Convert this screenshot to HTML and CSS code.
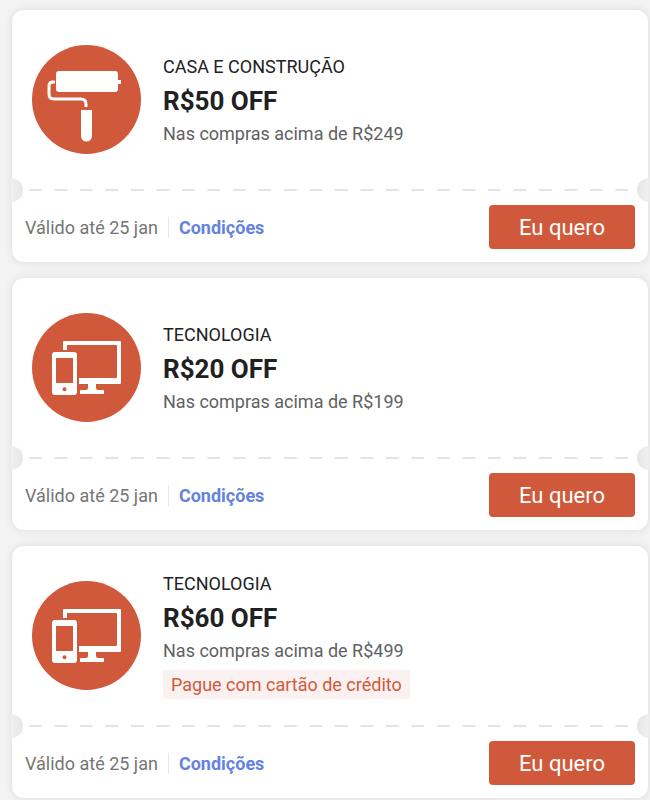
FILE: index.html
```
<!DOCTYPE html>
<html lang="pt-BR">
<head>
  <meta charset="UTF-8" />
  <meta name="viewport" content="width=device-width, initial-scale=1.0"/>
  <title>Cupons</title>
  <link rel="stylesheet" href="styles.css">
</head>
<body>
  <!-- Shared icon -->
  <svg class="sprite" width="0" height="0" aria-hidden="true">
    <symbol id="devices" viewBox="0 0 109 109">
      <path d="M31 37V29q0-1 1-1H88q1 0 1 1V70q0 1-1 1H64v4q0 2 2 2h5q1 0 1 1v3H48v-3q0-1 1-1h5q2 0 2-2V71H47V65H84q1 0 1-1V33q0-1-1-1H35V37z"/>
      <path fill-rule="evenodd" d="M23 39H42q3 0 3 3V79q0 3-3 3H23q-3 0-3-3V42q0-3 3-3zM24 45V70H41V45zM32.500 74.300a2 2 0 1 0 .01 0z"/>
    </symbol>
  </svg>

  <main class="coupons">
    <article class="coupon">
      <div class="coupon-top">
        <svg class="icon" viewBox="0 0 109 109" aria-hidden="true">
          <rect x="24" y="26" width="62" height="21" rx="3"/>
          <path d="M86 35h3v4h-3zM49 65H60V91a5.500 5.500 0 0 1-11 0z"/>
          <path class="wire" d="M23 37h-2q-4 0-4 4v8q0 5 5 5H49q5 0 5 5v3"/>
        </svg>
        <div class="info">
          <h2>CASA E CONSTRUÇÃO</h2>
          <p class="amount">R$50 OFF</p>
          <p class="rule">Nas compras acima de R$249</p>
        </div>
      </div>
      <div class="cut"></div>
      <div class="coupon-bottom">
        <span class="valid">Válido até 25 jan</span>
        <a href="#">Condições</a>
        <button type="button">Eu quero</button>
      </div>
    </article>

    <article class="coupon">
      <div class="coupon-top">
        <svg class="icon" aria-hidden="true"><use href="#devices"/></svg>
        <div class="info">
          <h2>TECNOLOGIA</h2>
          <p class="amount">R$20 OFF</p>
          <p class="rule">Nas compras acima de R$199</p>
        </div>
      </div>
      <div class="cut"></div>
      <div class="coupon-bottom">
        <span class="valid">Válido até 25 jan</span>
        <a href="#">Condições</a>
        <button type="button">Eu quero</button>
      </div>
    </article>

    <article class="coupon">
      <div class="coupon-top">
        <svg class="icon" aria-hidden="true"><use href="#devices"/></svg>
        <div class="info">
          <h2>TECNOLOGIA</h2>
          <p class="amount">R$60 OFF</p>
          <p class="rule">Nas compras acima de R$499</p>
          <p class="tag">Pague com cartão de crédito</p>
        </div>
      </div>
      <div class="cut"></div>
      <div class="coupon-bottom">
        <span class="valid">Válido até 25 jan</span>
        <a href="#">Condições</a>
        <button type="button">Eu quero</button>
      </div>
    </article>
  </main>
</body>
</html>
```
FILE: styles.css
```
* {
  box-sizing: border-box;
  margin: 0;
  padding: 0;
}

body {
  background-color: #f3f3f3;
  color: #212121;
  font-family: Roboto, sans-serif;
  font-size: 18px;
}

.sprite {
  position: absolute;
}

.coupons {
  display: flex;
  flex-direction: column;
  gap: 16px;
  padding: 10px 2px 2px 12px;
}

.coupon {
  background: #fff;
  border-radius: 12px;
  box-shadow: 0 0 10px rgba(0, 0, 0, 0.1);
}

.coupon-top {
  display: flex;
  align-items: center;
  gap: 22px;
  height: 179px;
  padding: 0 20px;
}

.icon {
  flex: none;
  width: 109px;
  height: 109px;
  border-radius: 50%;
  background: #d0593b;
  fill: #fff;
}

.wire {
  fill: none;
  stroke: #fff;
  stroke-width: 3;
}

h2 {
  font-size: 18px;
  font-weight: 400;
  line-height: 32px;
}

.amount {
  font-size: 26px;
  font-weight: 700;
  line-height: 36px;
}

.rule {
  color: #616161;
  line-height: 30px;
}

.tag {
  width: fit-content;
  margin: 4px 0;
  padding: 0 8px;
  background: #fcf1f1;
  color: #d0593b;
  line-height: 29px;
}

/* dashed line, repeated a whole number of times */
.cut {
  position: relative;
  height: 2px;
  padding: 0 7px 0 17px;
  background: linear-gradient(90deg, #e4e4e4 50%, transparent 50%) 0 0 / 25px 2px round content-box;
}

/* side notches */
.cut::before,
.cut::after {
  content: "";
  position: absolute;
  top: -11px;
  width: 12px;
  height: 24px;
}

.cut::before {
  left: -1px;
  border-radius: 0 12px 12px 0;
  background: linear-gradient(90deg, #f0f0f0, #e6e6e6);
}

.cut::after {
  right: -1px;
  border-radius: 12px 0 0 12px;
  background: linear-gradient(270deg, #f0f0f0, #e6e6e6);
}

.coupon-bottom {
  display: flex;
  align-items: center;
  padding: 14px 13px 13px;
}

.valid {
  padding-right: 10px;
  border-right: 1px solid #e8e8e8;
  color: #757575;
}

a {
  margin-left: 10px;
  color: #6482de;
  font-weight: 700;
  text-decoration: none;
}

button {
  width: 146px;
  height: 44px;
  margin-left: auto;
  border: none;
  border-radius: 4px;
  background: #d0593b;
  color: #fff;
  font-family: inherit;
  font-size: 22px;
  cursor: pointer;
}
```
